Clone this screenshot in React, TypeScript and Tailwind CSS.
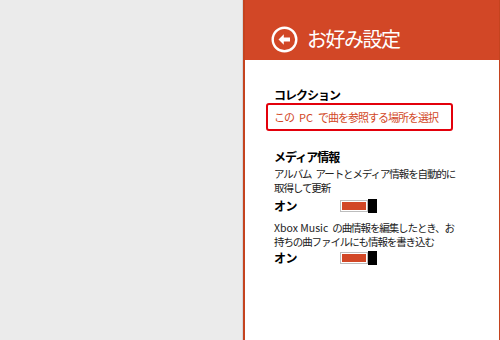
const JP = { fontFamily: '"Noto Sans CJK JP", "Noto Sans", sans-serif' }

function BackIcon() {
  return (
    <svg width="27" height="27" viewBox="0 0 27 27" fill="none">
      <circle cx="13.5" cy="13.5" r="11.8" stroke="white" strokeWidth="2.4" />
      <path d="M7.5 13.5 L12.8 8.3 L12.8 11.6 L19 11.6 L19 15.4 L12.8 15.4 L12.8 18.7 Z" fill="white" />
    </svg>
  )
}

// 詰めた字間の中で欠けないよう、空白は固定幅で入れる
function Gap({ w = 'w-[5px]' }: { w?: string }) {
  return <span className={`inline-block ${w}`} />
}

function Toggle() {
  return (
    <div className="flex items-center h-[14px]">
      <div className="w-[28px] h-[12px] border border-[#bdbdbd] bg-white p-[1px]">
        <div className="w-full h-full bg-[#d24726]" />
      </div>
      <div className="w-[9px] h-[14px] bg-black" />
    </div>
  )
}

function ToggleRow() {
  return (
    <div className="flex items-center h-[16px]">
      <span className="w-[66px] text-[12px] font-bold text-black tracking-[-0.5px]">オン</span>
      <Toggle />
    </div>
  )
}

export default function App() {
  return (
    <div className="w-[500px] h-[340px] flex bg-[#ebebeb] overflow-hidden" style={JP}>
      <div className="w-[243px] h-full border-r border-[#d6d6d6]" />
      <div className="flex-1 h-full flex flex-col bg-white border-l-2 border-r border-[#c4431f]">
        {/* header */}
        <div className="h-[60px] bg-[#d24726] flex items-center pl-[26px] pt-[18px]">
          <BackIcon />
          <span className="ml-[9px] text-[20px] text-white tracking-[-1.5px] leading-none">お好み設定</span>
        </div>

        {/* body */}
        <div className="pl-[29px] pt-[27px] text-black">
          <p className="text-[12px] font-bold leading-[16px] tracking-[-1px]">コレクション</p>
          <div className="-ml-[8px] w-[187px] h-[28px] border-2 border-[#e3000b] rounded-[3px] flex items-center pl-[6px]">
            <span className="text-[11px] text-[#d24726] tracking-[-1px] whitespace-nowrap">
              この<Gap /><span className="tracking-normal">PC</span><Gap />で曲を参照する場所を選択
            </span>
          </div>

          <p className="mt-[18px] text-[12px] font-bold leading-[16px] tracking-[-1px]">メディア情報</p>
          <p className="mt-[2px] text-[10.5px] leading-[14px] tracking-[-1.1px] whitespace-nowrap text-[#222]">
            アルバム<Gap w="w-[4px]" />アートとメディア情報を自動的に
            <br />
            取得して更新
          </p>
          <div className="mt-[3px]">
            <ToggleRow />
          </div>

          <p className="mt-[7px] text-[10.5px] leading-[14px] tracking-[-1.1px] whitespace-nowrap text-[#222]">
            <span className="tracking-normal">Xbox Music</span>
            <Gap w="w-[4px]" />の曲情報を編集したとき、お
            <br />
            持ちの曲ファイルにも情報を書き込む
          </p>
          <div className="mt-[1px]">
            <ToggleRow />
          </div>
        </div>
      </div>
    </div>
  )
}
